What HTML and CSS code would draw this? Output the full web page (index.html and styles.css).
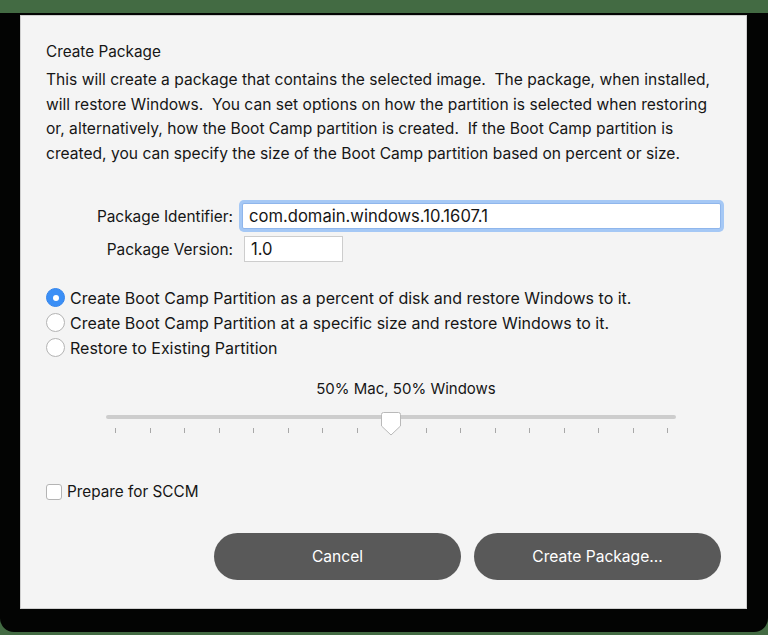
FILE: index.html
```html
<!DOCTYPE html>
<html>
<head>
<meta charset="utf-8">
<link rel="stylesheet" href="styles.css">
</head>
<body>
<div class="frame">
  <div class="dialog">
    <div class="title">Create Package</div>
    <p class="desc">This will create a package that contains the selected image.&nbsp; The package, when installed,<br>will restore Windows.&nbsp; You can set options on how the partition is selected when restoring<br>or, alternatively, how the Boot Camp partition is created.&nbsp; If the Boot Camp partition is<br>created, you can specify the size of the Boot Camp partition based on percent or size.</p>

    <div class="form">
      <label class="lbl">Package Identifier:</label>
      <div class="input focus">com.domain.windows.10.1607.1</div>
      <label class="lbl">Package Version:</label>
      <div class="input short">1.0</div>
    </div>

    <div class="radios">
      <div class="radio-row"><span class="radio on"></span><span>Create Boot Camp Partition as a percent of disk and restore Windows to it.</span></div>
      <div class="radio-row"><span class="radio"></span><span>Create Boot Camp Partition at a specific size and restore Windows to it.</span></div>
      <div class="radio-row"><span class="radio"></span><span>Restore to Existing Partition</span></div>
    </div>

    <div class="slider-label">50% Mac, 50% Windows</div>
    <div class="slider">
      <div class="track"></div>
      <svg class="thumb" width="22" height="26" viewBox="0 0 22 26"><path d="M3.5 1.5 H18.5 Q20.5 1.5 20.5 3.5 V15 L11 24 L1.5 15 V3.5 Q1.5 1.5 3.5 1.5 Z" fill="#fff" stroke="#b9b9b9" stroke-width="1"/></svg>
      <div class="ticks">
        <i></i><i></i><i></i><i></i><i></i><i></i><i></i><i></i><i></i><i></i><i></i><i></i><i></i><i></i><i></i><i></i><i></i>
      </div>
    </div>

    <div class="check-row"><span class="checkbox"></span><span>Prepare for SCCM</span></div>

    <div class="buttons">
      <div class="btn">Cancel</div>
      <div class="btn">Create Package...</div>
    </div>
  </div>
</div>
</body>
</html>
```
FILE: styles.css
```css
html, body {
  margin: 0;
  padding: 0;
  background: #436b43;
  width: 768px;
  height: 635px;
  overflow: hidden;
  font-family: Inter, "Liberation Sans", Arial, sans-serif;
  color: #161616;
}
.frame {
  margin-top: 13px;
  height: 619px;
  box-sizing: border-box;
  background: #030403;
  border-radius: 0 0 14px 14px;
  padding: 2px 21px 23px 20px;
}
.dialog {
  height: 594px;
  box-sizing: border-box;
  background: #f4f4f4;
  border: 1px solid #cfcfcf;
  padding: 26px 25px 0 25px;
}
.title {
  font-size: 15.3px;
  line-height: 20px;
}
.desc {
  margin: 6px 0 0 0;
  font-size: 15.6px;
  line-height: 24.6px;
  white-space: nowrap;
}
.form {
  display: grid;
  grid-template-columns: 187px auto;
  column-gap: 10px;
  row-gap: 7px;
  align-items: center;
  margin-top: 37px;
}
.lbl {
  text-align: right;
  font-size: 15.4px;
}
.input {
  height: 26px;
  box-sizing: border-box;
  background: #fff;
  border: 1px solid #cdcdcd;
  font-size: 16.6px;
  line-height: 24px;
  padding-left: 6px;
}
.input.focus {
  width: 479px;
  border-color: #8fb6ec;
  box-shadow: 0 0 0 3px #a5c8f5;
  border-radius: 2px;
  margin-left: -1px;
}
.input.short {
  width: 99px;
  margin-left: 1px;
}
.radios {
  margin-top: 23px;
}
.radio-row {
  display: flex;
  align-items: center;
  height: 25px;
  font-size: 16px;
}
.radio {
  width: 19px;
  height: 19px;
  box-sizing: border-box;
  border-radius: 50%;
  background: #fff;
  border: 1px solid #b4b4b4;
  margin-right: 5px;
  position: relative;
}
.radio.on {
  background: #3b8ff6;
  border-color: #3585ec;
}
.radio.on::after {
  content: "";
  position: absolute;
  left: 5.5px;
  top: 5.5px;
  width: 6px;
  height: 6px;
  border-radius: 50%;
  background: #fff;
}
.slider-label {
  margin-top: 19px;
  text-align: center;
  font-size: 15px;
  line-height: 20px;
  padding-left: 45px;
}
.slider {
  position: relative;
  margin: 16px 0 0 60px;
  width: 570px;
  height: 30px;
}
.track {
  height: 4px;
  border-radius: 2px;
  background: #cdcdcd;
  margin-top: 7px;
}
.thumb {
  position: absolute;
  left: 274px;
  top: -4px;
}
.ticks {
  display: flex;
  justify-content: space-between;
  padding: 0 8px 0 9px;
  margin-top: 9px;
}
.ticks i {
  display: block;
  width: 1px;
  height: 5px;
  background: #a8a8a8;
}
.check-row {
  display: flex;
  align-items: center;
  font-size: 15.3px;
  margin-top: 37px;
}
.checkbox {
  width: 16px;
  height: 16px;
  box-sizing: border-box;
  background: #fff;
  border: 1px solid #b4b4b4;
  border-radius: 3px;
  margin-right: 5px;
}
.buttons {
  display: flex;
  justify-content: flex-end;
  gap: 13px;
  margin-top: 32px;
  padding-right: 0;
}
.btn {
  width: 247px;
  height: 47px;
  border-radius: 24px;
  background: #595959;
  color: #fff;
  font-size: 15.6px;
  display: flex;
  align-items: center;
  justify-content: center;
}
```
